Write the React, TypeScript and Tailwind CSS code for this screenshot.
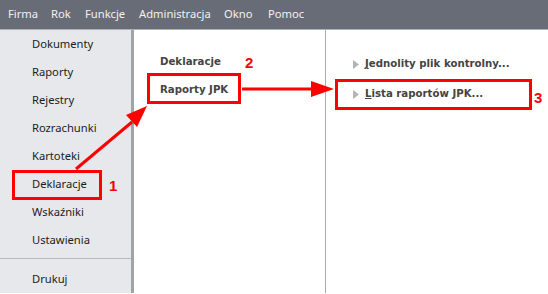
const menu: [string, string][] = [
	["Firma", "w-[43px]"],
	["Rok", "w-[34px]"],
	["Funkcje", "w-[54px]"],
	["Administracja", "w-[85px]"],
	["Okno", "w-[44px]"],
	["Pomoc", "w-[50px]"],
];
const sideItems = [
	"Dokumenty",
	"Raporty",
	"Rejestry",
	"Rozrachunki",
	"Kartoteki",
	"Deklaracje",
	"Wskaźniki",
	"Ustawienia",
];

function Triangle() {
	return (
		<svg width="6" height="9" viewBox="0 0 6 9" className="shrink-0">
			<path d="M0 0 L6 4.5 L0 9 Z" fill="#b4b4b4" />
		</svg>
	);
}

function Overlay() {
	return (
		<svg
			className="absolute inset-0 pointer-events-none"
			width="548"
			height="294"
			viewBox="0 0 548 294"
		>
			<g fill="none" stroke="#ff0000" strokeWidth="3">
				<rect x="13.5" y="171.5" width="87" height="27" />
				<rect x="148.5" y="74.5" width="91" height="28" />
				<rect x="336.5" y="80.5" width="194" height="28" />
			</g>
			<line x1="76" y1="169" x2="132" y2="122" stroke="#ff0000" strokeWidth="3" />
			<path d="M147 106 L126 115 L137 127 Z" fill="#ff0000" />
			<line x1="242" y1="89" x2="314" y2="89" stroke="#ff0000" strokeWidth="3" />
			<path d="M334 89 L311 81 L311 97 Z" fill="#ff0000" />
			<g
				fill="#ff0000"
				fontFamily="'Liberation Sans', Arial, sans-serif"
				fontWeight="700"
				fontSize="15"
			>
				<text x="109" y="191">1</text>
				<text x="245" y="68">2</text>
				<text x="534" y="103">3</text>
			</g>
		</svg>
	);
}

export default function App() {
	return (
		<div className="relative w-[548px] h-[294px] overflow-hidden bg-white font-['Noto_Sans',sans-serif]">
			<div className="flex items-center h-[30px] bg-[#686c76] border-b border-[#aeb0b5] pl-[8px] text-[11.2px] text-[#f2f2f2]">
				{menu.map(([m, w]) => (
					<span key={m} className={w}>
						{m}
					</span>
				))}
			</div>
			<div className="flex h-[263px]">
				<div className="w-[134px] shrink-0 bg-[#e7e8eb] border-r-[3px] border-[#a2a3a6] flex flex-col text-[11.2px] text-[#1c1c1c]">
					{sideItems.map((s) => (
						<div key={s} className="h-[28px] flex items-center pl-[32px]">
							{s}
						</div>
					))}
					<div className="mt-[4px] h-px bg-[#b8b9bc]" />
					<div className="h-[28px] mt-[6px] flex items-center pl-[32px]">
						Drukuj
					</div>
				</div>
				<div className="w-[192px] shrink-0 border-r border-[#ababab] pt-[22px] pl-[26px] font-['DejaVu_Sans',sans-serif] font-bold text-[10.2px] text-[#444]">
					<div className="h-[20px] flex items-center">Deklaracje</div>
					<div className="h-[26px] mt-[5px] flex items-center">Raporty JPK</div>
				</div>
				<div className="flex-1 pt-[24px] pl-[27px] font-['DejaVu_Sans',sans-serif] font-bold text-[10.2px] text-[#444]">
					<div className="h-[20px] flex items-center gap-[6px]">
						<Triangle />
						<span>
							<span className="underline">J</span>ednolity plik kontrolny...
						</span>
					</div>
					<div className="h-[20px] mt-[10px] flex items-center gap-[6px]">
						<Triangle />
						<span>
							<span className="underline">L</span>ista raportów JPK...
						</span>
					</div>
				</div>
			</div>
			<Overlay />
		</div>
	);
}
